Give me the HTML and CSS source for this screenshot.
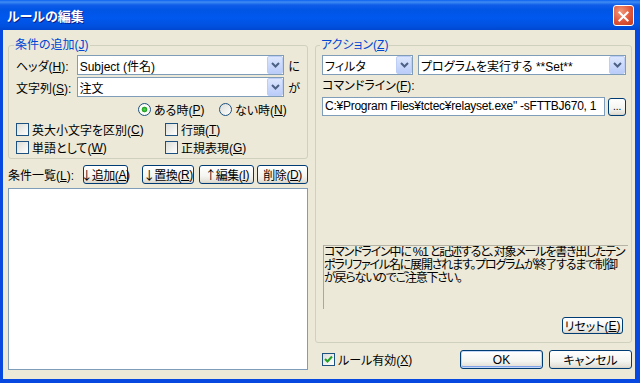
FILE: index.html
```html
<!DOCTYPE html>
<html lang="ja">
<head>
    <meta charset="UTF-8">
    <title>ルールの編集</title>
    <link rel="stylesheet" href="styles.css">
</head>
<body>
    <div class="window">
        <div class="titlebar">
            <span class="title">ルールの編集</span>
            <span class="close-btn">
                <svg width="21" height="21" viewBox="0 0 21 21">
                    <path d="M6 6 L15 15 M15 6 L6 15" stroke="#fff" stroke-width="2.2" stroke-linecap="square"/>
                </svg>
            </span>
        </div>
        <div class="client">
            <div class="col-left">
                <fieldset class="group group-cond">
                    <legend>条件の追加(<u>J</u>)</legend>
                    <div class="field-row">
                        <span class="field-label">ヘッダ(<u>H</u>):</span>
                        <div class="combo combo-wide"><span class="combo-text">Subject (件名)</span><span class="drop"><svg width="9" height="6" viewBox="0 0 9 6"><path d="M1 1 L4.5 4.5 L8 1" stroke="#4D6185" stroke-width="2" fill="none"/></svg></span></div>
                        <span class="suffix">に</span>
                    </div>
                    <div class="field-row">
                        <span class="field-label">文字列(<u>S</u>):</span>
                        <div class="combo combo-wide"><span class="combo-text">注文</span><span class="drop"><svg width="9" height="6" viewBox="0 0 9 6"><path d="M1 1 L4.5 4.5 L8 1" stroke="#4D6185" stroke-width="2" fill="none"/></svg></span></div>
                        <span class="suffix">が</span>
                    </div>
                    <div class="radio-row">
                        <span class="option opt-first"><span class="radio on"></span>ある時(<u>P</u>)</span>
                        <span class="option"><span class="radio"></span>ない時(<u>N</u>)</span>
                    </div>
                    <div class="check-grid">
                        <span class="option"><span class="check"></span>英大小文字を区別(<u>C</u>)</span>
                        <span class="option"><span class="check"></span>行頭(<u>T</u>)</span>
                        <span class="option"><span class="check"></span>単語として(<u>W</u>)</span>
                        <span class="option"><span class="check"></span>正規表現(<u>G</u>)</span>
                    </div>
                </fieldset>
                <div class="list-bar">
                    <span class="list-label">条件一覧(<u>L</u>):</span>
                    <button class="btn btn-add"><span class="arrow">↓</span>追加(<u>A</u>)</button>
                    <button class="btn btn-replace"><span class="arrow">↓</span>置換(<u>R</u>)</button>
                    <button class="btn btn-edit"><span class="arrow">↑</span>編集(<u>I</u>)</button>
                    <button class="btn btn-del">削除(<u>D</u>)</button>
                </div>
                <div class="listbox"></div>
            </div>
            <div class="col-right">
                <fieldset class="group group-action">
                    <legend>アクション(<u>Z</u>)</legend>
                    <div class="action-row">
                        <div class="combo combo-kind"><span class="combo-text">フィルタ</span><span class="drop"><svg width="9" height="6" viewBox="0 0 9 6"><path d="M1 1 L4.5 4.5 L8 1" stroke="#4D6185" stroke-width="2" fill="none"/></svg></span></div>
                        <div class="combo combo-action"><span class="combo-text">プログラムを実行する **Set**</span><span class="drop"><svg width="9" height="6" viewBox="0 0 9 6"><path d="M1 1 L4.5 4.5 L8 1" stroke="#4D6185" stroke-width="2" fill="none"/></svg></span></div>
                    </div>
                    <div class="cmd-label">コマンドライン(<u>F</u>):</div>
                    <div class="cmd-row">
                        <div class="textbox">C:¥Program Files¥tctec¥relayset.exe" -sFTTBJ670, 1</div>
                        <button class="btn btn-browse">...</button>
                    </div>
                    <div class="note">コマンドライン中に %1 と記述すると、対象メールを書き出したテン<br>ポラリファイル名に展開されます。プログラムが終了するまで制御<br>が戻らないのでご注意下さい。</div>
                    <button class="btn btn-reset">リセット(<u>E</u>)</button>
                </fieldset>
                <div class="footer">
                    <span class="option"><span class="check checked"><svg width="11" height="11" viewBox="0 0 11 11"><path d="M2 5 L4.5 7.5 L9 2.5" stroke="#21A121" stroke-width="2" fill="none"/></svg></span>ルール有効(<u>X</u>)</span>
                    <button class="btn btn-ok">OK</button>
                    <button class="btn btn-cancel">キャンセル</button>
                </div>
            </div>
        </div>
    </div>
</body>
</html>
```

FILE: styles.css
```css
* { box-sizing: border-box; }
body { margin: 0; font-family: "Liberation Sans", "Noto Sans CJK JP", sans-serif; font-size: 12px; font-feature-settings: "palt"; color: #000; }
u { text-underline-offset: 1px; }

.window { width: 640px; height: 383px; display: flex; flex-direction: column; background: #0648E0; }
.titlebar {
    height: 30px;
    display: flex;
    align-items: center;
    justify-content: space-between;
    padding: 0 6px 0 7px;
    background: linear-gradient(180deg, #0A61F0 0, #3F8CF3 2px, #0F5DE8 5px, #0055E5 10px, #0058EE 60%, #0050DE 88%, #0046CF 100%);
}
.title { color: #fff; font-weight: bold; font-size: 13px; text-shadow: 1px 1px #0A1E8C; }
.close-btn {
    width: 21px; height: 21px;
    border: 1px solid #fff;
    border-radius: 3px;
    background: radial-gradient(circle at 35% 30%, #F09A7C 0, #E0563A 55%, #C23A1C 100%);
    display: flex;
}

.client { flex: 1; margin: 0 5px 4px 3px; background: #ECE9D8; display: flex; gap: 7px; padding: 8px 3px 0 5px; }
.col-left { width: 300px; display: flex; flex-direction: column; }
.col-right { width: 317px; display: flex; flex-direction: column; }

.group { margin: 0; border: 1px solid #D0D0BF; border-radius: 3px; min-width: 0; }
.group legend { color: #0046D5; line-height: 14px; padding: 0 1px; margin-left: -2px; }
.group-cond { padding: 3px 7px 4px; }
.group-action { padding: 3px 5px 8px 6px; display: flex; flex-direction: column; height: 305px; }

.field-row { display: flex; align-items: center; height: 20px; }
.field-row + .field-row { margin-top: 2px; }
.field-label { width: 61px; }
.suffix { margin-left: 4px; }

.combo { height: 20px; border: 1px solid #7F9DB9; background: #fff; display: flex; align-items: center; padding-left: 2px; }
.combo-text { flex: 1; white-space: nowrap; overflow: hidden; }
.combo-wide { width: 209px; }
.combo-kind { width: 91px; }
.combo-action { width: 208px; }
.drop {
    width: 16px; height: 18px;
    border: 1px solid #BDCEF6;
    border-radius: 2px;
    background: linear-gradient(180deg, #DCE6FD, #BACCF9);
    display: flex; align-items: center; justify-content: center;
}

.option { display: flex; align-items: center; height: 13px; white-space: nowrap; }
.radio { width: 13px; height: 13px; border-radius: 50%; border: 1px solid #1C5180; background: linear-gradient(135deg, #DCDCD7, #fff); margin-right: 3px; }
.radio.on { background: radial-gradient(circle, #55D655 0, #21A121 2.5px, #fff 3.2px, #EFEFEA 100%); }
.radio-row { display: flex; margin-top: 6px; padding-left: 122px; }
.opt-first { width: 81px; }

.check { width: 13px; height: 13px; border: 1px solid #1C5180; background: linear-gradient(135deg, #DCDCD7, #fff); margin-right: 3px; display: flex; }
.check-grid { display: grid; grid-template-columns: 149px auto; row-gap: 5px; margin-top: 7px; }

.btn {
    font: inherit;
    color: #000;
    padding: 0;
    border: 1px solid #003C74;
    border-radius: 3px;
    background: linear-gradient(180deg, #fff 0, #F4F4F0 60%, #E3E1D8 90%, #D6D0C5 100%);
    display: flex; align-items: center; justify-content: center;
    white-space: nowrap;
}
.arrow { font-family: "Noto Sans CJK JP", sans-serif; font-feature-settings: normal; width: 11px; text-align: center; }

.list-bar { display: flex; align-items: center; height: 19px; margin-top: 6px; }
.list-label { width: 75px; }
.list-bar .btn { height: 19px; letter-spacing: -0.4px; }
.btn-add { width: 45px; }
.btn-replace { width: 53px; margin-left: 14px; }
.btn-edit { width: 55px; margin-left: 5px; }
.btn-del { width: 51px; margin-left: 3px; }
.listbox { margin-top: 4px; height: 182px; border: 1px solid #7F9DB9; background: #fff; }

.action-row { display: flex; gap: 5px; }
.cmd-label { margin-top: 4px; line-height: 14px; }
.cmd-row { display: flex; align-items: center; gap: 3px; margin-top: 4px; }
.textbox { width: 285px; height: 19px; border: 1px solid #7F9DB9; background: #fff; padding-left: 2px; line-height: 17px; white-space: nowrap; overflow: hidden; letter-spacing: -0.25px; }
.btn-browse { width: 18px; height: 18px; font-size: 10px; }

.note {
    margin: 129px -2px 0 1px;
    height: 64px;
    border-top: 1px solid #B5B3A6;
    border-left: 1px solid #A7A6AA;
    line-height: 13px;
    white-space: nowrap;
    overflow: hidden;
    letter-spacing: -1.2px;
}
.btn-reset { width: 61px; height: 17px; margin-top: 8px; align-self: flex-end; margin-right: 3px; }

.footer { display: flex; align-items: center; height: 19px; margin-top: 7px; padding-left: 7px; }
.footer .btn { width: 83px; height: 19px; }
.btn-ok { margin-left: auto; box-shadow: inset 0 0 0 1px #C4D6F8, inset 0 -1px 0 1px #7DA2E8; }
.btn-cancel { margin-left: 6px; }
```
